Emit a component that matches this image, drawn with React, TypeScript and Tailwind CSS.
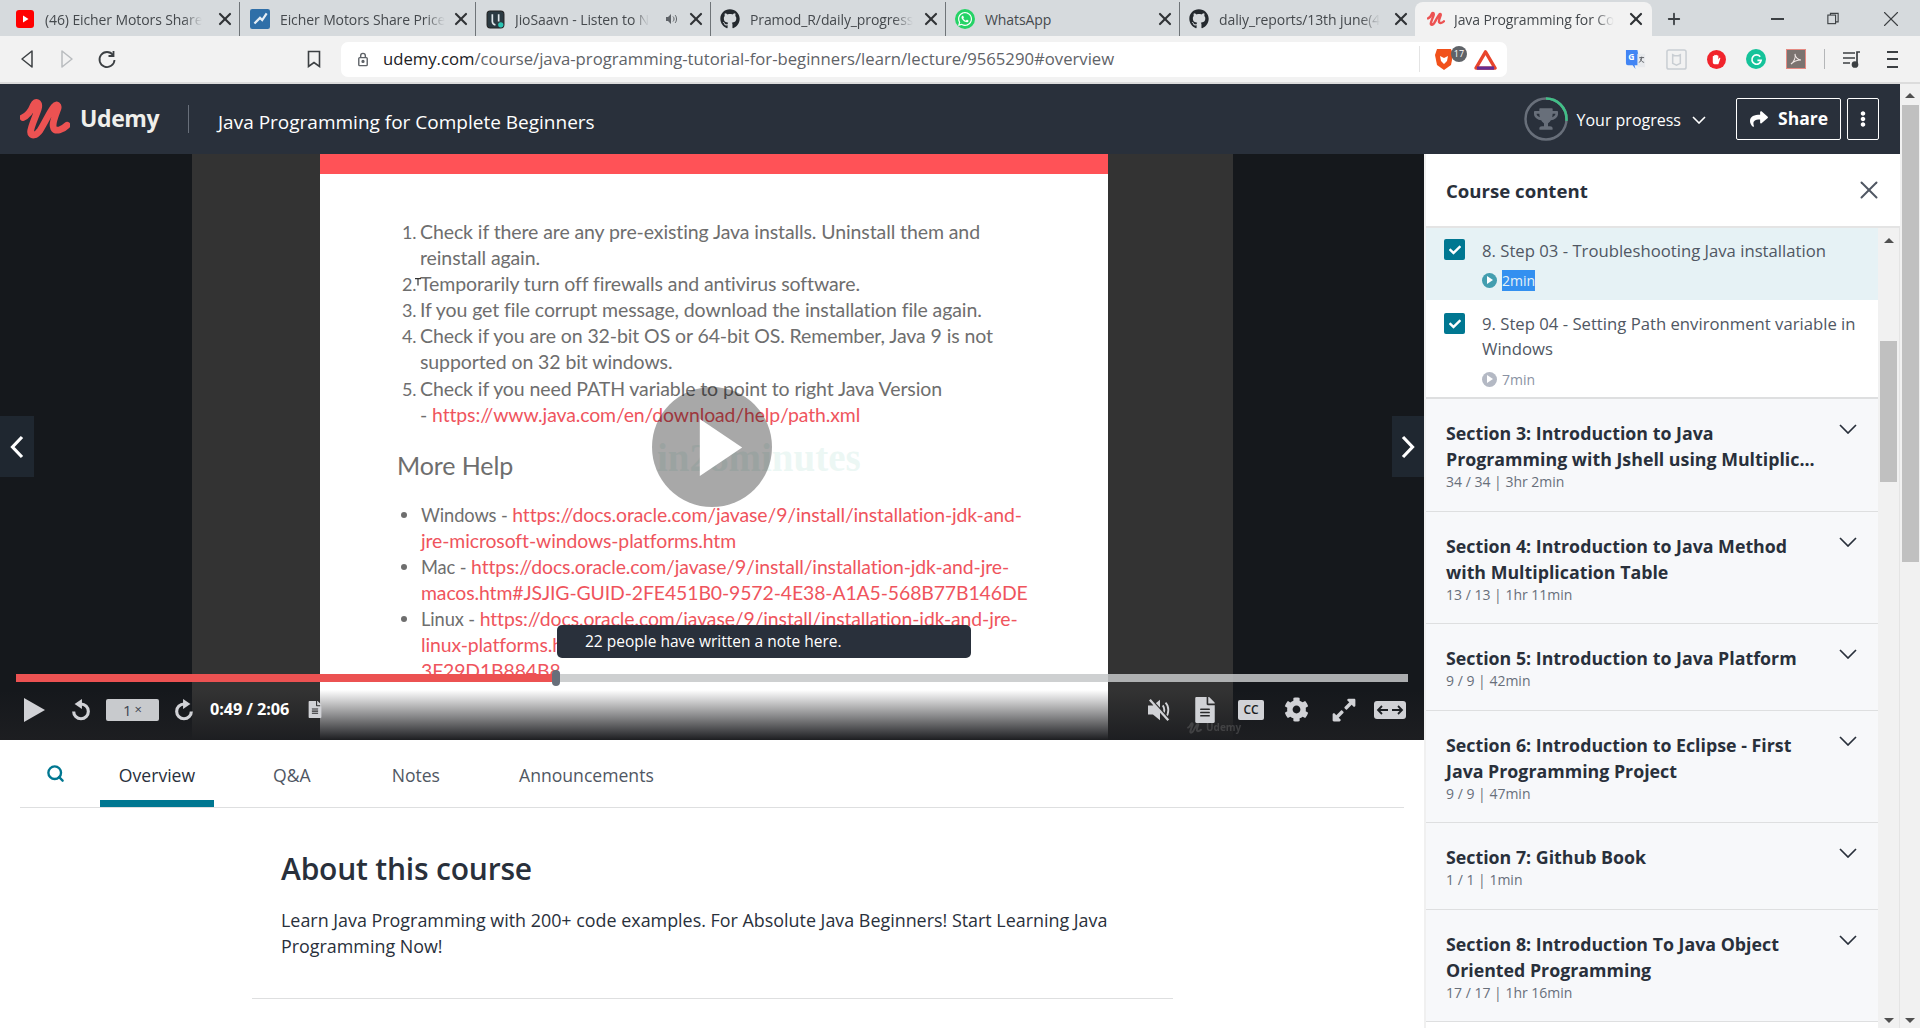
import { Plus, Search, X } from 'lucide-react'
import { FaCheck, FaCog, FaEllipsisV, FaExpandAlt, FaFileAlt, FaGithub, FaShare, FaTrophy, FaWhatsapp } from 'react-icons/fa'

const UdemyMark = ({ className }: { className?: string }) => (
  <svg viewBox="0 0 52 43" className={className} fill="none">
    <path d="M3 20 C8 18 12 12 14 7 C16 2 21 4 19 11 C16 20 11 30 11 35 C11 40 17 39 21 33 C26 25 31 14 35 9 C38 5 41 7 39 12 C36 20 33 27 35 31 C37 35 44 33 49 28" stroke="#ec5252" strokeWidth="7" strokeLinecap="round" strokeLinejoin="round" />
  </svg>
)

const YoutubeIcon = () => (
  <svg viewBox="0 0 18 18" className="h-[18px] w-[18px]">
    <rect width="18" height="18" rx="3" fill="#f00" />
    <path d="M7 5.500 12.500 9 7 12.500z" fill="#fff" />
  </svg>
)

const MoneyIcon = () => (
  <svg viewBox="0 0 18 18" className="h-[20px] w-[20px]">
    <rect width="18" height="18" rx="2" fill="#2f6fa8" />
    <path d="M4 13 9 8l2 2 4-6" stroke="#e6eef5" strokeWidth="2" fill="none" />
  </svg>
)

const SaavnIcon = () => (
  <svg viewBox="0 0 18 18" className="h-[19px] w-[19px]">
    <rect x="1" y="1" width="16" height="16" rx="3" fill="#2b3a42" stroke="#222" />
    <path d="M6 4v7c0 2 2 3 3 3M12 4v7" stroke="#dfe7ea" strokeWidth="1.600" fill="none" />
    <circle cx="14" cy="14" r="2.500" fill="#2bc5b4" />
  </svg>
)

const tabs = [
  { icon: <YoutubeIcon />, title: '(46) Eicher Motors Share', w: 'w-[240px]', pl: 'pl-[15px]', fade: true },
  { icon: <MoneyIcon />, title: 'Eicher Motors Share Price', w: 'w-[236px]', pl: 'pl-[10px]', fade: true },
  { icon: <SaavnIcon />, title: 'JioSaavn - Listen to N', w: 'w-[235px]', pl: 'pl-[9px]', sound: true, fade: true },
  { icon: <FaGithub className="h-[20px] w-[20px] text-[#24292e]" />, title: 'Pramod_R/daily_progress', w: 'w-[235px]', pl: 'pl-[9px]', fade: true },
  { icon: <span className="flex h-[20px] w-[20px] items-center justify-center rounded-full bg-[#25d366]"><FaWhatsapp className="h-[16px] w-[16px] text-white" /></span>, title: 'WhatsApp', w: 'w-[234px]', pl: 'pl-[9px]' },
  { icon: <FaGithub className="h-[20px] w-[20px] text-[#24292e]" />, title: 'daliy_reports/13th june(4', w: 'w-[235px]', pl: 'pl-[9px]', last: true, fade: true },
]

function Tab({ icon, title, w, pl, sound, last, fade }: { icon: React.ReactNode; title: string; w: string; pl: string; sound?: boolean; last?: boolean; fade?: boolean }) {
  return (
    <div className={`flex h-full shrink-0 items-center ${w} ${pl} pr-[4px] ${last ? '' : 'border-r border-[#6f7478]'}`}>
      <div className="flex w-[20px] shrink-0 justify-center">{icon}</div>
      <div className="ml-[10px] flex-1 whitespace-nowrap text-[14px] tracking-[-0.1px] text-[#45494d]">
        <span className={`inline-block ${fade ? '[mask-image:linear-gradient(to_right,black_88%,transparent)]' : ''}`}>{title}</span>
      </div>
      {sound && (
        <svg viewBox="0 0 12 12" className="mr-[9px] h-[12px] w-[12px]" fill="#5f6368"><path d="M1 4h2l3-3v10L3 8H1z" /><path d="M8 3.500c1.400 1.400 1.400 3.600 0 5M10 2c2 2 2 6 0 8" stroke="#5f6368" fill="none" /></svg>
      )}
      <X className="h-[20px] w-[20px] shrink-0 text-[#303336]" strokeWidth={2.600} />
    </div>
  )
}

function BrowserTabs() {
  return (
    <div className="flex h-[36px] shrink-0 items-stretch bg-[#d6dadd] pt-[2px]">
      {tabs.map((t) => <Tab key={t.title} {...t} />)}
      <div className="flex w-[237px] shrink-0 items-center rounded-t-[8px] bg-[#f2f2f2] pl-[12px] pr-[6px]">
        <UdemyMark className="h-[16px] w-[18px] shrink-0" />
        <div className="ml-[9px] flex-1 whitespace-nowrap text-[14px] tracking-[-0.1px] text-[#45494d]">
          <span className="inline-block [mask-image:linear-gradient(to_right,black_88%,transparent)]">Java Programming for Co</span>
        </div>
        <X className="h-[20px] w-[20px] shrink-0 text-[#303336]" strokeWidth={2.600} />
      </div>
      <Plus className="ml-[13px] mt-[8px] h-[18px] w-[18px] text-[#3c4043]" strokeWidth={2.400} />
      <div className="ml-auto flex items-start pt-[14px] text-[#3c4043]">
        <div className="mr-[43px] mt-[2px] h-[1.500px] w-[13px] bg-[#3c4043]" />
        <svg viewBox="0 0 14 14" className="-mt-[4px] mr-[39px] h-[13px] w-[12px]" fill="none" stroke="#3c4043" strokeWidth="1.300"><rect x="1" y="3" width="9" height="10" /><path d="M4 3V1h9v10h-3" /></svg>
        <X className="-mt-[10px] mr-[16px] h-[26px] w-[26px]" strokeWidth={1} />
      </div>
    </div>
  )
}

function Toolbar() {
  return (
    <div className="flex h-[48px] shrink-0 items-center border-b-2 border-[#dcdcdc] bg-[#f2f2f2] pl-[7px]">
      <div className="flex w-[40px] justify-center">
        <svg viewBox="0 0 14 20" className="h-[20px] w-[14px]" fill="none" stroke="#3c4043" strokeWidth="1.500" strokeLinejoin="round"><path d="M12 2 2 10l10 8z" /></svg>
      </div>
      <div className="flex w-[40px] justify-center">
        <svg viewBox="0 0 14 20" className="h-[20px] w-[14px]" fill="none" stroke="#b9bcbf" strokeWidth="1.500" strokeLinejoin="round"><path d="M2 2l10 8-10 8z" /></svg>
      </div>
      <div className="flex w-[40px] justify-center">
        <svg viewBox="0 0 20 20" className="h-[20px] w-[20px]" fill="none" stroke="#3c4043" strokeWidth="1.800"><path d="M16 6a7.500 7.500 0 1 0 1.500 5" /><path d="M16.500 2v5h-5" /></svg>
      </div>
      <div className="ml-[167px] flex w-[40px] justify-center">
        <svg viewBox="0 0 14 18" className="h-[18px] w-[14px]" fill="none" stroke="#3c4043" strokeWidth="1.600"><path d="M1.500 1.500h11v15L7 12.500l-5.500 4z" /></svg>
      </div>
      <div className="ml-[7px] flex h-[35px] w-[1166px] items-center rounded-[7px] bg-white pl-[16px]">
        <svg viewBox="0 0 12 16" className="h-[15px] w-[12px]" fill="none" stroke="#5f6368" strokeWidth="1.500"><rect x="1.500" y="6" width="9" height="8.500" rx="1" /><path d="M3.500 6V4a2.500 2.500 0 0 1 5 0v2" /><circle cx="6" cy="10" r="1" fill="#5f6368" /></svg>
        <span className="ml-[14px] whitespace-nowrap text-[16.700px] text-[#5f6368]"><span className="text-[#202124]">udemy.com</span>/course/java-programming-tutorial-for-beginners/learn/lecture/9565290#overview</span>
        <div className="ml-auto mr-[10px] flex items-center">
          <div className="mr-[14px] h-[26px] w-px bg-[#e4e4e4]" />
          <div className="relative h-[24px] w-[20px]">
            <svg viewBox="0 0 20 24" className="h-[24px] w-[20px]"><path d="M3 2h14l2 6-2 10-7 5-7-5L1 8z" fill="#f1511b" /><path d="M6 9l4 2 4-2-1 5-3 3-3-3z" fill="#fff" /></svg>
            <span className="absolute -right-[13px] -top-[1px] flex h-[16px] w-[16px] items-center justify-center rounded-full bg-[#5f6368] text-[9px] text-white">17</span>
          </div>
          <svg viewBox="0 0 24 22" className="ml-[20px] h-[21px] w-[23px]" fill="none"><path d="M12 3 22 20H2z" stroke="#e8452c" strokeWidth="3.500" strokeLinejoin="round" /><path d="M3 20h18" stroke="#662d91" strokeWidth="3.500" /></svg>
        </div>
      </div>
      <div className="ml-[108px] flex w-[40px] justify-center">
        <svg viewBox="0 0 22 22" className="h-[21px] w-[21px]"><path d="M1 1h12l3 16h-6l1 4-3-4H3a2 2 0 0 1-2-2z" fill="#4285f4" /><text x="3.500" y="12" fontSize="9" fontWeight="700" fill="#fff" fontFamily="Open Sans">G</text><path d="M13 5h8v14h-8z" fill="#e8eaed" /><path d="M15 9h5M17.500 8v1c0 3-2 5-3 5M16 10c1 3 3 4 4 4" stroke="#5f6368" fill="none" /></svg>
      </div>
      <div className="ml-px flex w-[40px] justify-center">
        <svg viewBox="0 0 22 22" className="h-[21px] w-[21px]" fill="none" stroke="#c9ced3" strokeWidth="1.600"><rect x="1" y="1" width="20" height="20" rx="2" /><path d="M7 6l2 1h4l2-1v9l-4 2-4-2z" /></svg>
      </div>
      <div className="flex w-[40px] justify-center">
        <span className="flex h-[19px] w-[19px] items-center justify-center rounded-full bg-[#f1242c]">
          <svg viewBox="0 0 14 14" className="h-[13px] w-[13px]" fill="#fff"><path d="M3 6V3.500a.8.8 0 0 1 1.500 0V2.500a.8.8 0 0 1 1.500 0 .8.8 0 0 1 1.500 0v.5a.8.8 0 0 1 1.500 0V7l1-1.500c.6-.7 1.500 0 1 .7L9 12H5c-1.500 0-2-1-2-2.500z" /></svg>
        </span>
      </div>
      <div className="flex w-[40px] justify-center">
        <span className="flex h-[20px] w-[20px] items-center justify-center rounded-full bg-[#15c39a]">
          <svg viewBox="0 0 14 14" className="h-[13px] w-[13px]" fill="none" stroke="#fff" strokeWidth="1.800"><path d="M11 4a5 5 0 1 0 1 4H8" /></svg>
        </span>
      </div>
      <div className="flex w-[40px] justify-center">
        <span className="flex h-[20px] w-[20px] items-center justify-center border border-[#e58a82] bg-[#7b7370]">
          <svg viewBox="0 0 14 14" className="h-[14px] w-[14px]" fill="none" stroke="#f1e8e6" strokeWidth="1.100"><path d="M2 12c3-2 5-7 4-10 0 3 3 6 6 6-3 0-7 1-10 4z" /></svg>
        </span>
      </div>
      <div className="ml-[8px] h-[20px] w-px bg-[#b4b6b8]" />
      <div className="ml-[7px] flex w-[40px] justify-center">
        <svg viewBox="0 0 20 18" className="h-[18px] w-[20px]" fill="none" stroke="#3c4043" strokeWidth="1.700"><path d="M1 3h12M1 8h12M1 13h7" /><path d="M15 14V2h3" /><circle cx="13" cy="14.500" r="2.500" fill="#3c4043" /></svg>
      </div>
      <div className="flex w-[40px] justify-center">
        <div className="flex h-[17px] w-[11px] flex-col justify-between">
          <div className="h-[2px] bg-[#3c4043]" /><div className="h-[2px] bg-[#3c4043]" /><div className="h-[2px] bg-[#3c4043]" />
        </div>
      </div>
    </div>
  )
}

function CourseHeader() {
  return (
    <div className="flex h-[70px] shrink-0 items-center bg-[#29303b] pb-[1px] text-white">
      <UdemyMark className="ml-[20px] h-[42px] w-[50px]" />
      <span className="ml-[10px] w-[78px] text-[23px] font-bold tracking-[-0.4px] text-[#f0efeb]">Udemy</span>
      <div className="ml-[30px] h-[28px] w-px bg-[#686f7a]" />
      <span className="ml-[29px] pt-[7px] text-[19px]">Java Programming for Complete Beginners</span>
      <div className="relative ml-auto flex h-[44px] w-[44px] items-center justify-center">
        <svg viewBox="0 0 44 44" className="absolute inset-0 h-[44px] w-[44px] -rotate-90" fill="none">
          <circle cx="22" cy="22" r="20.500" stroke="#686f7a" strokeWidth="2.500" />
          <circle cx="22" cy="22" r="20.500" stroke="#41bf87" strokeWidth="2.500" strokeDasharray="34 129" />
        </svg>
        <FaTrophy className="h-[22px] w-[24px] text-[#686f7a]" />
      </div>
      <span className="ml-[9px] pt-[2px] text-[16px]">Your progress</span>
      <svg viewBox="0 0 14 8" className="ml-[11px] mt-[2px] h-[8px] w-[14px]" fill="none" stroke="#fff" strokeWidth="1.600"><path d="M1 1l6 6 6-6" /></svg>
      <button className="ml-[30px] flex h-[42px] w-[105px] items-center justify-center gap-[9px] rounded-[2px] border border-white text-[17.500px] font-bold">
        <FaShare className="h-[18px] w-[20px]" />Share
      </button>
      <button className="ml-[6px] mr-[21px] flex h-[42px] w-[32px] items-center justify-center rounded-[2px] border border-white">
        <FaEllipsisV className="h-[16px] w-[12px]" />
      </button>
    </div>
  )
}

const Link = ({ children }: { children: React.ReactNode }) => <span className="text-[19.400px] text-[#ef545d]">{children}</span>
const Label = ({ children }: { children: React.ReactNode }) => <span className="text-[18.300px]">{children}</span>

function Slide() {
  const numbered: [string, React.ReactNode][] = [
    ['1.', 'Check if there are any pre-existing Java installs. Uninstall them and'],
    ['', 'reinstall again.'],
    ['2.', 'Temporarily turn off firewalls and antivirus software.'],
    ['3.', 'If you get file corrupt message, download the installation file again.'],
    ['4.', 'Check if you are on 32-bit OS or 64-bit OS. Remember, Java 9 is not'],
    ['', 'supported on 32 bit windows.'],
    ['5.', 'Check if you need PATH variable to point to right Java Version'],
    ['', <>- <Link>https://www.java.com/en/download/help/path.xml</Link></>],
  ]
  const bullets: [boolean, React.ReactNode][] = [
    [true, <><Label>Windows - </Label><Link>https://docs.oracle.com/javase/9/install/installation-jdk-and-</Link></>],
    [false, <Link>jre-microsoft-windows-platforms.htm</Link>],
    [true, <><Label>Mac - </Label><Link>https://docs.oracle.com/javase/9/install/installation-jdk-and-jre-</Link></>],
    [false, <Link>macos.htm#JSJIG-GUID-2FE451B0-9572-4E38-A1A5-568B77B146DE</Link>],
    [true, <><Label>Linux - </Label><Link>https://docs.oracle.com/javase/9/install/installation-jdk-and-jre-</Link></>],
    [false, <Link>linux-platforms.htm</Link>],
    [false, <Link>3F29D1B884B8</Link>],
  ]
  return (
    <div className="w-[788px] shrink-0 overflow-hidden bg-white font-['Lato',sans-serif] text-[19.500px] leading-[26.100px] tracking-[-0.1px] text-[#6e6e6e]">
      <div className="h-[20px] bg-[#ff5257]" />
      <div className="pl-[82px] pt-[45px]">
        {numbered.map(([n, line], i) => (
          <div key={i} className="flex whitespace-nowrap">
            <span className="relative w-[18px] shrink-0 text-[18px]">
              {n}
              {n === '2.' && <svg viewBox="0 0 6 8" className="absolute left-[13px] top-[7px] h-[8px] w-[6px]" fill="none" stroke="#333" strokeWidth="1.200"><path d="M0 .6h6M3 .6v7" /></svg>}
            </span>
            <span>{line}</span>
          </div>
        ))}
      </div>
      <div className="ml-[77px] mt-[22px] text-[25px] leading-[30px]">More Help</div>
      <div className="pl-[81px] pt-[22px]">
        {bullets.map(([dot, line], i) => (
          <div key={i} className="flex whitespace-nowrap">
            <span className="flex w-[20px] shrink-0 items-center">{dot && <span className="h-[6px] w-[6px] rounded-full bg-[#6e6e6e]" />}</span>
            <span>{line}</span>
          </div>
        ))}
      </div>
    </div>
  )
}

function SkipIcon({ forward, className }: { forward?: boolean; className?: string }) {
  return (
    <svg viewBox="0 0 24 24" className={`${className} ${forward ? '-scale-x-100' : ''}`} fill="none" stroke="currentColor" strokeWidth="3.400">
      <path d="M12 5.500a8 8 0 1 1-8 8" />
      <path d="M13 0v11L5 5.500z" fill="currentColor" stroke="none" />
    </svg>
  )
}

function PlayerControls() {
  return (
    <div className="absolute inset-x-0 bottom-0 h-[70px]">
      <div className="absolute inset-x-0 bottom-0 h-[50px] bg-gradient-to-b from-transparent to-[#1d1e21]" />
      <div className="relative ml-[16px] mt-[4px] flex h-[8px] w-[1392px] items-center bg-[#c5c8c9]/85">
        <div className="h-full w-[540px] bg-[#ec5252]" />
        <div className="-ml-[4px] h-[16px] w-[8px] rounded-full bg-[#686f7a]" />
        <div className="absolute bottom-[24px] left-[541px] flex h-[33px] w-[414px] items-center rounded-[5px] bg-[#29303b] pl-[28px] text-[15.500px] text-white">22 people have written a note here.</div>
      </div>
      <div className="relative flex h-[58px] items-center pb-[3px] text-[#d1d2d6]">
        <svg viewBox="0 0 21 24" className="ml-[24px] h-[24px] w-[21px]" fill="currentColor"><path d="M0 0 21 12 0 24z" /></svg>
        <SkipIcon className="ml-[25px] h-[22px] w-[22px]" />
        <div className="ml-[14px] flex h-[22px] w-[53px] items-center justify-center rounded-[2px] bg-[#c8cacd] pt-[1px] text-[15px] text-[#3e4550]">1<span className="ml-[3px] text-[13px]">×</span></div>
        <SkipIcon forward className="ml-[14px] h-[22px] w-[22px]" />
        <span className="ml-[15px] w-[82px] whitespace-nowrap text-[16.300px] font-bold tracking-[-0.1px] text-white">0:49 / 2:06</span>
        <FaFileAlt className="ml-[16px] h-[17px] w-[14px]" />
        <svg viewBox="0 0 26 24" className="ml-[826px] h-[24px] w-[24px]" fill="none" stroke="currentColor" strokeWidth="2">
          <path d="M1 8h5l6-5v18l-6-5H1z" fill="currentColor" />
          <path d="M16 7c2 3 2 7 0 10M19 4c4 4 4 12 0 16" />
          <path d="M4 1l20 22" stroke="#2e2e2f" strokeWidth="2" />
          <path d="M2 1l20 22" strokeWidth="2.500" />
        </svg>
        <FaFileAlt className="ml-[22px] h-[26px] w-[22px]" />
        <div className="ml-[22px] flex h-[20px] w-[26px] items-center justify-center rounded-[2px] bg-[#d1d2d6] text-[12px] font-semibold leading-none text-[#1b1e22]">CC</div>
        <FaCog className="ml-[20px] h-[25px] w-[25px]" />
        <FaExpandAlt className="ml-[22px] h-[26px] w-[26px]" />
        <div className="ml-[17px] flex h-[18px] w-[32px] items-center justify-center rounded-[3px] bg-[#d1d2d6] text-[#1b1e22]">
          <svg viewBox="0 0 28 12" className="h-[12px] w-[28px]" fill="none" stroke="currentColor" strokeWidth="1.800"><path d="M12 6H2M6 2 2 6l4 4M16 6h10M22 2l4 4-4 4" /></svg>
        </div>
        <div className="absolute bottom-[5px] left-[1187px] flex items-center gap-[4px] opacity-30">
          <UdemyMark className="h-[12px] w-[15px] [&_path]:stroke-[#8a8a8a]" />
          <span className="text-[10px] font-bold text-[#8a8a8a]">Udemy</span>
        </div>
      </div>
    </div>
  )
}

function VideoPlayer() {
  return (
    <div className="relative flex h-[586px] shrink-0 overflow-hidden bg-[#15181c]">
      <div className="w-[192px] shrink-0" />
      <div className="w-[128px] shrink-0 bg-[#333333]" />
      <Slide />
      <div className="w-[125px] shrink-0 bg-[#333333]" />

      <div className="absolute left-0 top-[262px] flex h-[61px] w-[34px] items-center justify-center bg-[#1f2730]">
        <svg viewBox="0 0 14 24" className="h-[24px] w-[14px]" fill="none" stroke="#fff" strokeWidth="3.200"><path d="M12 2 2.500 12l9.500 10" /></svg>
      </div>
      <div className="absolute right-0 top-[262px] flex h-[61px] w-[32px] items-center justify-center bg-[#1f2730]">
        <svg viewBox="0 0 14 24" className="h-[24px] w-[14px]" fill="none" stroke="#fff" strokeWidth="3.200"><path d="M2 2l9.500 10L2 22" /></svg>
      </div>

      <span className="absolute left-[657px] top-[283px] font-['Liberation_Serif',serif] text-[39px] font-bold leading-[42px] text-[#dff2ee]/60">in28minutes</span>
      <div className="absolute left-[652px] top-[233px] flex h-[120px] w-[120px] items-center justify-center rounded-full bg-black/[0.34]">
        <svg viewBox="0 0 52 70" className="ml-[18px] h-[57px] w-[50px]" fill="#fff"><path d="M0 0 52 35 0 70z" /></svg>
      </div>

      <PlayerControls />
    </div>
  )
}

function LectureTabs() {
  return (
    <div className="mx-[20px] flex h-[68px] shrink-0 items-stretch border-b border-[#dedfe0] text-[17.600px] text-[#505763]">
      <div className="flex w-[80px] items-center pl-[26px]">
        <Search className="h-[19px] w-[19px] text-[#007791]" strokeWidth={3} />
      </div>
      <div className="flex w-[114px] items-center justify-center border-b-[7px] border-[#007791] pt-[11px] text-[#29303b]">Overview</div>
      <div className="ml-[59px] flex items-center pt-[4px]">Q&amp;A</div>
      <div className="ml-[81px] flex items-center pt-[4px]">Notes</div>
      <div className="ml-[79px] flex items-center pt-[4px]">Announcements</div>
    </div>
  )
}

function About() {
  return (
    <div className="ml-[252px] w-[921px] border-b border-[#dedfe0] pb-[39px] pl-[29px] pr-[30px] pt-[42px] text-[#29303b]">
      <h2 className="text-[30px] font-semibold leading-[38px] tracking-[-0.2px]">About this course</h2>
      <p className="mt-[19px] text-[17.900px] leading-[26px]">Learn Java Programming with 200+ code examples. For Absolute Java Beginners! Start Learning Java Programming Now!</p>
    </div>
  )
}

function LessonItem({ title, time, active, selected }: { title: string; time: string; active?: boolean; selected?: boolean }) {
  return (
    <div className={`flex pl-[18px] pr-[16px] ${active ? 'h-[72px] bg-[#e6f2f5] pt-[10px]' : 'h-[99px] border-b-2 border-[#dedfe0] bg-white pt-[11px]'}`}>
      <div className={`flex h-[21px] w-[21px] shrink-0 items-center justify-center rounded-[2px] bg-[#007791] ${active ? 'mt-px' : 'mt-[2px]'}`}>
        <FaCheck className="h-[12px] w-[12px] text-white" />
      </div>
      <div className="ml-[17px] min-w-0 flex-1">
        <div className="text-[16.700px] leading-[25px] text-[#505763]">{title}</div>
        <div className={`flex h-[20px] items-center ${active ? 'mt-[7px]' : 'mt-[8px]'}`}>
          <span className={`flex h-[15px] w-[15px] items-center justify-center rounded-full ${active ? 'bg-[#439eaf]' : 'bg-[#b4b9c4]'}`}>
            <svg viewBox="0 0 8 8" className="ml-px h-[8px] w-[8px]" fill="#fff"><path d="M1 0 7 4 1 8z" /></svg>
          </span>
          <span className={`ml-[5px] text-[14px] ${selected ? 'bg-[#3390f0] text-[#e6f2f5]' : 'text-[#8a92a3]'}`}>{time}</span>
        </div>
      </div>
    </div>
  )
}

const sections = [
  { title: ['Section 3: Introduction to Java', 'Programming with Jshell using Multiplic...'], meta: '34 / 34 | 3hr 2min' },
  { title: ['Section 4: Introduction to Java Method', 'with Multiplication Table'], meta: '13 / 13 | 1hr 11min' },
  { title: ['Section 5: Introduction to Java Platform'], meta: '9 / 9 | 42min' },
  { title: ['Section 6: Introduction to Eclipse - First', 'Java Programming Project'], meta: '9 / 9 | 47min' },
  { title: ['Section 7: Github Book'], meta: '1 / 1 | 1min' },
  { title: ['Section 8: Introduction To Java Object', 'Oriented Programming'], meta: '17 / 17 | 1hr 16min' },
]

function SectionRow({ title, meta }: { title: string[]; meta: string }) {
  return (
    <div className="flex border-b border-[#dedfe0] bg-[#f7f8fa] pb-[18.500px] pl-[20px] pr-[21px] pt-[21px]">
      <div className="min-w-0 flex-1 whitespace-nowrap">
        {title.map((line) => <div key={line} className="text-[17.800px] font-bold leading-[26px] text-[#29303b]">{line}</div>)}
        <div className="h-[20px] text-[14px] leading-[20px] text-[#686f7a]">{meta}</div>
      </div>
      <svg viewBox="0 0 18 10" className="mt-[4px] h-[10px] w-[18px] shrink-0" fill="none" stroke="#29303b" strokeWidth="1.700"><path d="M1 1l8 8 8-8" /></svg>
    </div>
  )
}

function ScrollArrow({ down }: { down?: boolean }) {
  return <div className={`h-0 w-0 border-x-[5px] border-x-transparent ${down ? 'border-t-[5px] border-t-[#505050]' : 'border-b-[5px] border-b-[#505050]'}`} />
}

function Sidebar() {
  return (
    <div className="flex w-[476px] shrink-0 flex-col border-l-2 border-[#f0f0f0] bg-white">
      <div className="flex h-[74px] shrink-0 items-center justify-between border-b-2 border-[#e4e4e4] pl-[20px] pr-[16px]">
        <h2 className="pt-[2px] text-[18.600px] font-bold text-[#29303b]">Course content</h2>
        <X className="h-[30px] w-[30px] text-[#505763]" strokeWidth={1.600} />
      </div>
      <div className="flex min-h-0 flex-1">
        <div className="min-w-0 flex-1 overflow-hidden">
          <LessonItem title="8. Step 03 - Troubleshooting Java installation" time="2min" active selected />
          <LessonItem title="9. Step 04 - Setting Path environment variable in Windows" time="7min" />
          {sections.map((s) => <SectionRow key={s.meta} {...s} />)}
        </div>
        <div className="flex w-[22px] shrink-0 flex-col items-center border-r border-[#e4e4e4] bg-[#f1f1f1]">
          <div className="flex h-[24px] shrink-0 items-center"><ScrollArrow /></div>
          <div className="mt-[89px] h-[141px] w-[17px] shrink-0 bg-[#c0c0c0]" />
          <div className="mt-auto flex h-[10px] shrink-0 items-start"><ScrollArrow down /></div>
        </div>
      </div>
    </div>
  )
}

export default function App() {
  return (
    <div className="flex h-[1028px] w-[1920px] flex-col overflow-hidden bg-white font-['Open_Sans',sans-serif]">
      <BrowserTabs />
      <Toolbar />
      <div className="flex min-h-0 flex-1">
        <div className="flex min-w-0 flex-1 flex-col">
          <CourseHeader />
          <div className="flex min-h-0 flex-1">
            <div className="flex w-[1424px] shrink-0 flex-col">
              <VideoPlayer />
              <LectureTabs />
              <About />
            </div>
            <Sidebar />
          </div>
        </div>
        <div className="flex w-[20px] shrink-0 flex-col items-center bg-[#f1f1f1]">
          <div className="flex h-[21px] shrink-0 items-center pt-[2px]"><ScrollArrow /></div>
          <div className="h-[457px] w-[17px] shrink-0 bg-[#c0c0c0]" />
          <div className="mt-auto flex h-[10px] shrink-0 items-start"><ScrollArrow down /></div>
        </div>
      </div>
    </div>
  )
}
